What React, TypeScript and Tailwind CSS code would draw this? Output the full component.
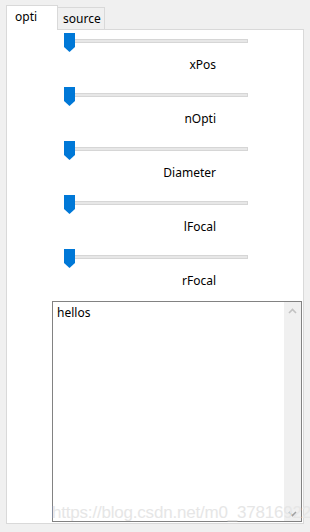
import React from 'react'

const font = { fontFamily: '"Noto Sans", "Noto Sans CJK SC", sans-serif' }

const labels = ['xPos', 'nOpti', 'Diameter', 'lFocal', 'rFocal']

const Thumb = () => (
  <svg width="11" height="19" viewBox="0 0 11 19" className="absolute left-0 top-0">
    <path d="M0 0 H11 V14 L5.5 19 L0 14 Z" fill="#0078d7" />
  </svg>
)

const SliderRow = ({ label }: { label: string }) => (
  <div className="h-[54px] pl-[57px]">
    <div className="relative h-[19px] w-[184px]">
      <div className="absolute left-0 top-[6px] h-[4px] w-[184px] border border-[#d6d6d6] bg-[#e7e7e7]" />
      <Thumb />
    </div>
    <div className="w-[152px] text-right text-[12px] leading-[16px] text-black mt-[5px]">{label}</div>
  </div>
)

export default function App() {
  return (
    <div className="relative w-[310px] h-[532px] bg-[#f0f0f0] pl-[6px] pt-[5px]" style={font}>
      <div className="flex h-[24px] items-end">
        <div className="relative z-10 h-[25px] w-[52px] border border-b-0 border-[#d9d9d9] bg-white pl-[8px] pt-[3px] text-[12px] leading-[16px] -mb-px">
          opti
        </div>
        <div className="h-[22px] w-[47px] border border-l-0 border-b-0 border-[#d9d9d9] bg-[#f0f0f0] pl-[5px] pt-[4px] text-[12px] leading-[14px]">
          source
        </div>
      </div>
      <div className="w-[298px] h-[495px] border border-[#d9d9d9] bg-white pt-[3px]">
        {labels.map((l) => (
          <SliderRow key={l} label={l} />
        ))}
        <div className="ml-[45px] mt-[-2px] flex h-[221px] w-[250px] border border-[#828282] bg-white">
          <div className="flex-1 pl-[4px] pt-[3px] text-[12px] leading-[16px] text-black">hellos</div>
          <div className="flex w-[17px] flex-col justify-between bg-[#f0f0f0] pb-[3px] pt-[5px]">
            <svg width="17" height="8" viewBox="0 0 17 8">
              <path d="M5 6 L8.5 2.5 L12 6" stroke="#c2c2c2" strokeWidth="1.6" fill="none" />
            </svg>
            <svg width="17" height="8" viewBox="0 0 17 8">
              <path d="M5 2 L8.5 5.5 L12 2" stroke="#a0a0a0" strokeWidth="1.6" fill="none" />
            </svg>
          </div>
        </div>
      </div>
      <div
        className="absolute left-[52px] top-[503px] text-[17px] leading-[20px] text-[#e6e6e6] tracking-[-0.2px]"
        style={{ fontFamily: '"Liberation Sans", Arial, sans-serif' }}
      >
        https://blog.csdn.net/m0_37816922
      </div>
    </div>
  )
}
